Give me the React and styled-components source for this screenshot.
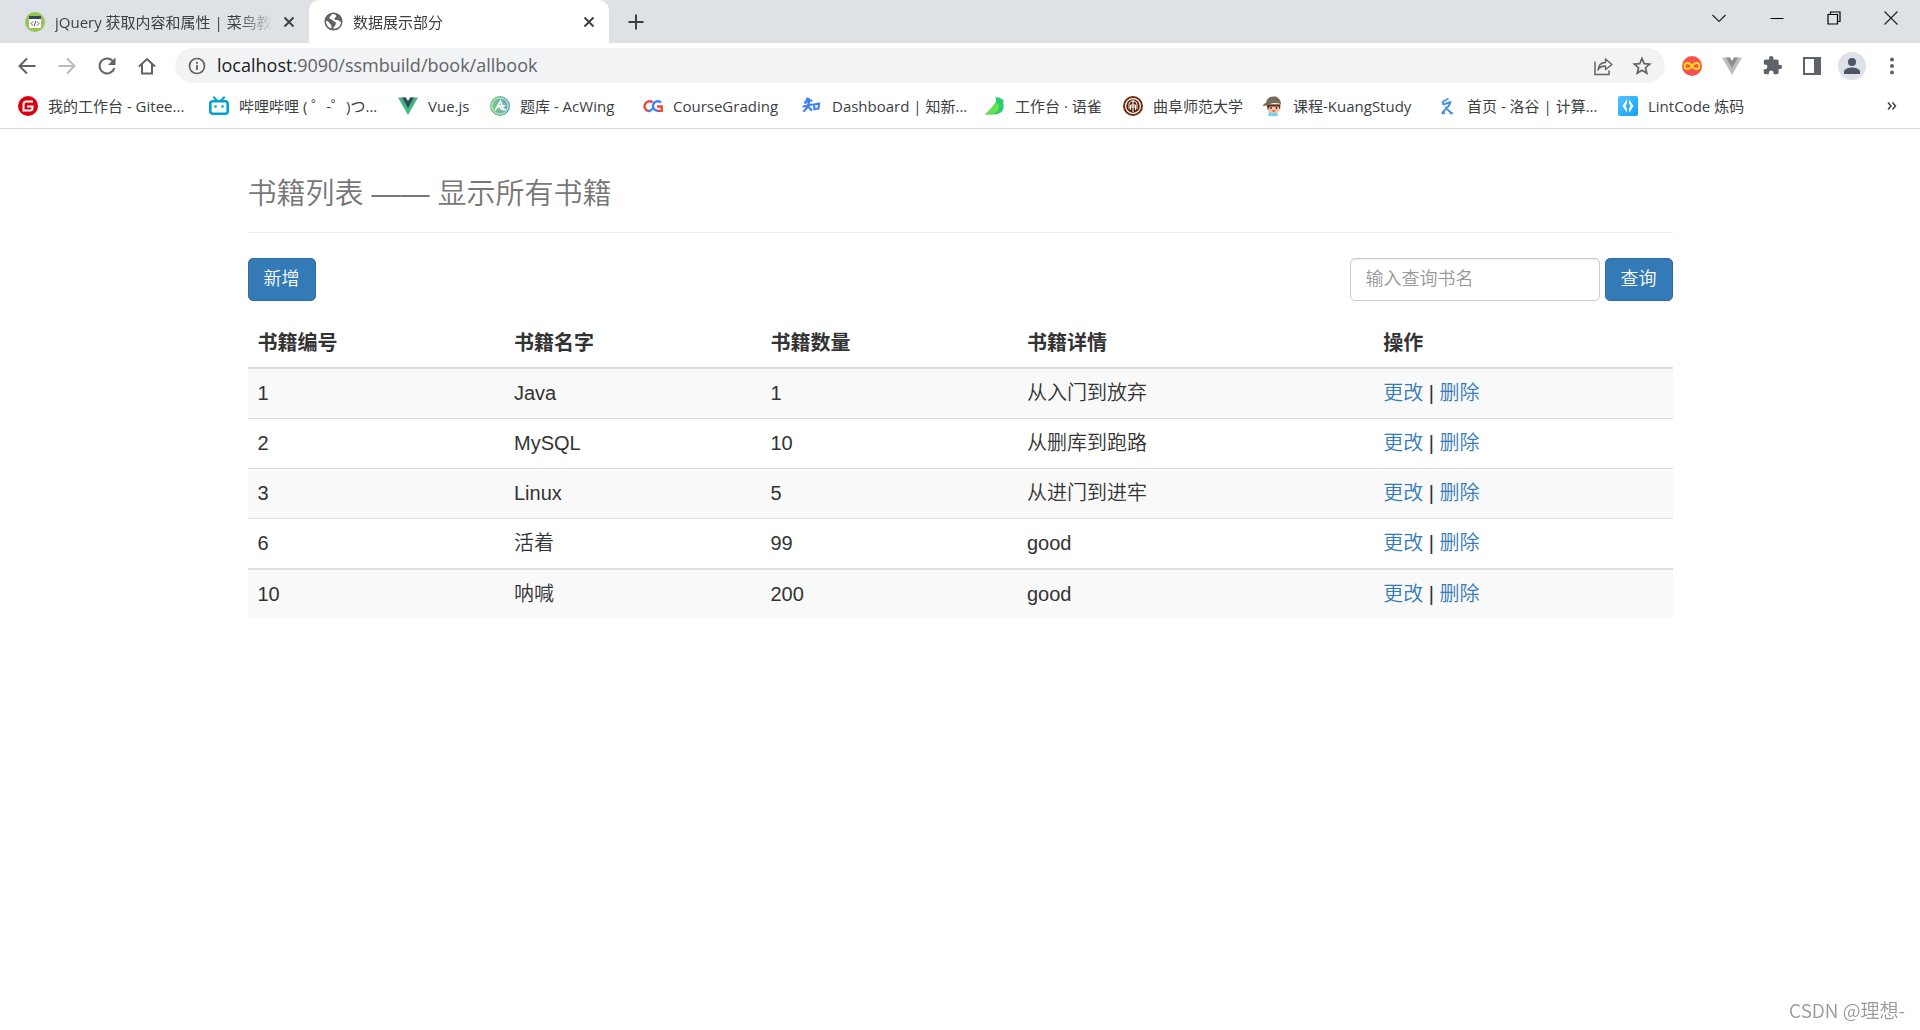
import React, { useState } from 'react';
import styled, { createGlobalStyle } from 'styled-components';

const GlobalStyle = createGlobalStyle`
  * {
    box-sizing: border-box;
  }

  body {
    margin: 0;
    background: #fff;
    color: #333;
    font-family: "Liberation Sans", "Noto Sans CJK SC", sans-serif;
    font-size: 20px;
    font-weight: 350;
    line-height: 29px;
  }

  button, input {
    font-family: inherit;
    font-weight: inherit;
  }
`;

// Browser chrome
const Browser = styled.header`
  font-family: "Open Sans", "Noto Sans CJK SC", sans-serif;
  font-size: 15px;
  font-weight: 400;
  line-height: 20px;
  color: #3c4043;
  border-bottom: 1px solid #d5d8dc;
`;

const TabStrip = styled.div`
  display: flex;
  height: 43px;
  background: #dee1e6;
`;

const Tab = styled.div`
  display: flex;
  align-items: center;
  gap: 10px;
  width: ${props => props.$active ? '300px' : '309px'};
  padding: 0 13px 0 ${props => props.$active ? '15px' : '25px'};
  background: ${props => props.$active ? '#fff' : 'transparent'};
  border-radius: 10px 10px 0 0;
`;

const TabTitle = styled.span`
  flex: 1;
  min-width: 0;
  overflow: hidden;
  white-space: nowrap;
  mask-image: linear-gradient(to right, #000 85%, transparent);
`;

const IconButton = styled.button`
  display: flex;
  flex: none;
  align-items: center;
  justify-content: center;
  width: ${props => props.$width || 40}px;
  height: ${props => props.$height || 36}px;
  padding: 0;
  border: none;
  border-radius: 4px;
  background: none;
  color: ${props => props.$color || '#5f6368'};
  cursor: pointer;
`;

const WindowControls = styled.div`
  display: flex;
  margin-left: auto;
  padding-right: 1px;
`;

const Toolbar = styled.div`
  display: flex;
  align-items: center;
  height: 45px;
  padding: 0 8px 0 7px;
`;

const AddressBar = styled.div`
  display: flex;
  flex: 1;
  align-items: center;
  height: 35px;
  margin: 0 7px 0 8px;
  padding: 0 4px 0 12px;
  border-radius: 18px;
  background: #f1f3f4;
`;

const Url = styled.span`
  flex: 1;
  margin-left: 10px;
  padding-bottom: 2px;
  font-size: 18px;
  color: #5f6368;

  b {
    font-weight: 400;
    color: #202124;
  }
`;

const Avatar = styled.span`
  display: flex;
  align-items: center;
  justify-content: center;
  width: 28px;
  height: 28px;
  border-radius: 50%;
  background: #dee1e6;
`;

const Bookmarks = styled.nav`
  display: flex;
  align-items: center;
  gap: 20px;
  height: 40px;
  padding: 0 8px 4px 18px;
`;

const Bookmark = styled.a`
  display: flex;
  flex: 0 0 ${props => props.$width}px;
  align-items: center;
  gap: 10px;
  min-width: 0;
  white-space: nowrap;
  color: inherit;
  text-decoration: none;

  svg {
    flex: none;
  }
`;

const More = styled.div`
  margin-left: auto;
`;

// Page content
const Container = styled.main`
  max-width: 1463px;
  margin: 0 auto;
  padding: 0 19px;
`;

const PageHeader = styled.div`
  margin: 38px 0 25px;
  padding: 11px 0 22px;
  border-bottom: 1px solid #eee;
`;

const Title = styled.h1`
  margin: 0;
  font-size: 29px;
  font-weight: 350;
  line-height: 32px;
  color: #777;
`;

const Actions = styled.div`
  display: flex;
  justify-content: space-between;
`;

const SearchForm = styled.form`
  display: flex;
  gap: 5px;
`;

const Button = styled.button`
  height: 43px;
  padding: 0 15px;
  border: 1px solid #2e6da4;
  border-radius: 5px;
  background: #337ab7;
  font-size: 18px;
  line-height: 25px;
  color: #fff;
  cursor: pointer;
`;

const SearchInput = styled.input`
  width: 250px;
  height: 43px;
  padding: 0 15px;
  border: 1px solid #ccc;
  border-radius: 5px;
  background: #fff;
  box-shadow: inset 0 1px 1px rgba(0,0,0,0.075);
  font-size: 18px;
  color: #555;

  &::placeholder {
    color: #999;
  }
`;

const Table = styled.table`
  width: 100%;
  margin-top: 17px;
  border-collapse: separate;
  border-spacing: 0;
  table-layout: fixed;
`;

const HeadCell = styled.th`
  width: ${props => props.$width};
  padding: 11px 10px 9px;
  border-bottom: 2px solid #ddd;
  text-align: left;
`;

const Cell = styled.td`
  height: 49px;
  padding: 10px;
`;

const Row = styled.tr`
  &:nth-child(odd) {
    background: #f9f9f9;
  }

  &:not(:first-child) ${Cell} {
    height: 50px;
    border-top: 1px solid #ddd;
  }

  &:last-child ${Cell} {
    padding-bottom: 9px;
    border-top-width: 2px;
  }
`;

const Link = styled.a`
  color: #337ab7;
  text-decoration: none;

  &:hover {
    text-decoration: underline;
  }
`;

const Watermark = styled.div`
  position: fixed;
  right: 15px;
  bottom: 6px;
  font-family: "Noto Sans CJK SC", sans-serif;
  font-size: 19px;
  font-weight: 350;
  color: #999;
  text-shadow: 1px 1px 0 #fff;
`;

const Icon = ({ size = 20, box = 20, children }) => (
  <svg width={size} height={size} viewBox={`0 0 ${box} ${box}`} fill="none" aria-hidden="true">
    {children}
  </svg>
);

const CloseIcon = () => (
  <Icon size={12} box={12}>
    <path d="M1.5 1.5l9 9M10.5 1.5l-9 9" stroke="#3c4043" strokeWidth="1.9" />
  </Icon>
);

const RunoobIcon = () => (
  <Icon>
    <circle cx="10" cy="10" r="10" fill="#96c455" />
    <rect x="4" y="5" width="12" height="11" rx="1" fill="#fff" />
    <path d="M4 4h12v3H4z" fill="#35495e" />
    <path d="M8 9.5l-2 2 2 2M12 9.5l2 2-2 2M10.7 9l-1.4 5" stroke="#555" strokeWidth="1" />
  </Icon>
);

const GlobeIcon = () => (
  <Icon size={19} box={24}>
    <circle cx="12" cy="12" r="11.5" fill="#5f6368" />
    <path d="M10 2.5c-1 3-3 2.5-3 5 0 2 3 1 4 3s4 1 4 4-3 3-3 6.500c6 .2 9.500-4 9.500-9-3 1-2-2-4-2s-3 1-4-1 2-2 2-4c0-1.300-2-2.500-5.500-2.500zM2.500 11.500c0 5 3 8.500 7 9.300-.5-3 .3-4-1.700-5.500S6.500 11.500 2.500 11.500z" fill="#fff" />
  </Icon>
);

const GiteeIcon = () => (
  <Icon>
    <circle cx="10" cy="10" r="10" fill="#d9000f" />
    <path d="M15 5.500H8.500a3 3 0 0 0-3 3v6H12a2.500 2.500 0 0 0 2.500-2.500v-1.600H9" stroke="#fff" strokeWidth="2" />
  </Icon>
);

const BiliIcon = () => (
  <Icon>
    <rect x="1.300" y="5.300" width="17.400" height="12.400" rx="2.500" stroke="#00a1d6" strokeWidth="2.600" />
    <path d="M5 1.500l2.500 2.500M15 1.500L12.500 4" stroke="#00a1d6" strokeWidth="2.200" strokeLinecap="round" />
    <circle cx="6.500" cy="10.500" r="1.300" fill="#00a1d6" />
    <circle cx="13.500" cy="10.500" r="1.300" fill="#00a1d6" />
  </Icon>
);

const VueIcon = ({ outer = '#41b883', inner = '#35495e' }) => (
  <Icon>
    <path d="M0 1.500h7.500L10 5.500l2.500-4H20L10 19z" fill={outer} />
    <path d="M4 1.500h4L10 5l2-3.500h4L10 12z" fill={inner} />
  </Icon>
);

const AcWingIcon = () => (
  <Icon>
    <defs>
      <linearGradient id="acwing" x1="0" x2="1">
        <stop stopColor="#79c878" />
        <stop offset="1" stopColor="#69a9c9" />
      </linearGradient>
    </defs>
    <circle cx="10" cy="10" r="10" fill="url(#acwing)" />
    <circle cx="10" cy="10" r="8" stroke="#d8f0e0" strokeWidth="0.900" />
    <path d="M5 14.500L10.500 5l3.500 9.500M7 12c2-2.500 5-3 8-2M10 10.500c.5 2.500 2.500 3.500 6 3" stroke="#fff" strokeWidth="1.500" />
  </Icon>
);

const CourseIcon = () => (
  <Icon>
    <path d="M9.500 6.200A5 5 0 1 0 5 15" stroke="#f04438" strokeWidth="2.400" />
    <path d="M5 15c2 .2 3.500-.8 4.500-2.500M18 6.500a4.800 4.800 0 1 0-3 8.300" stroke="#3b82f6" strokeWidth="2.400" />
    <path d="M14 10.500h4.700V16M14.500 14.800h4" stroke="#f04438" strokeWidth="2.300" />
  </Icon>
);

const ZhiIcon = () => (
  <Icon>
    <path d="M5.500 2.500L3.500 7M3 6l6.500-1.500M1.500 10.500L10 8.500M7 3c.5 6-1.500 9-5 12M6.500 11l3 3M12 8.500l.5 5M12 8.500l5-1-.5 5-4 .5" stroke="#3f83ee" strokeWidth="2.200" strokeLinecap="round" />
  </Icon>
);

const YuqueIcon = () => (
  <Icon>
    <path d="M10 1.500c4-1 6 .5 7 2l2 .5c-1 1-1 2-.5 4.500C19.500 15 15 18.500 9 18.500H0C5 14 10 8 11 5c.5-1.500 0-2.500-1-3.500z" fill="#2bcb6f" />
    <path d="M0 18.500C5 14 9 9.500 11 6c4 3 4 8 0 10.500-2 1.500-6 2-11 2z" fill="#65e04f" />
  </Icon>
);

const SchoolIcon = () => (
  <Icon>
    <circle cx="10" cy="10" r="9" fill="#fff" stroke="#6d2d0d" strokeWidth="2" />
    <circle cx="10" cy="10" r="6.800" fill="#5a250c" />
    <path d="M6 13V8.500C6 6 8 5 10 5s4 1 4 3.500V13M10 4v12M7.500 14V9h5v5M8 11h4" stroke="#fff" strokeWidth="1" />
  </Icon>
);

const KuangIcon = () => (
  <Icon>
    <path d="M6 15h8l1 5H5z" fill="#72d4ec" />
    <path d="M4 8h13v5c-1 3-3 4-6.500 4S5 16 4 13z" fill="#f3c3a0" />
    <path d="M3.500 8.500h14l-.5 5-1.500-3-9 0L5 14z" fill="#5a2b20" />
    <path d="M3 7C4 1 9 0 12 .5S18 4 18 8c-5-1.500-9-1.500-14 1.500L0 10c0-1.500 1-2.500 3-3z" fill="#756a5b" />
    <circle cx="8" cy="12" r=".9" fill="#402018" />
    <circle cx="13.500" cy="12" r=".9" fill="#402018" />
    <path d="M9 14.500h3.500c-.5 1.500-3 1.500-3.500 0z" fill="#c52c2c" />
  </Icon>
);

const LuoguIcon = () => (
  <Icon>
    <path d="M11.500 2.500L5.500 6l1 2.500L13.500 6 12 9.500 5 17.200M4.500 17.200h3.500M8 11l6.500 6.200M12.500 17.200h3.500" stroke="#4e94d4" strokeWidth="2" strokeLinejoin="round" />
  </Icon>
);

const LintIcon = () => (
  <Icon>
    <defs>
      <linearGradient id="lint" x1="0" y1="0" x2="1" y2="1">
        <stop stopColor="#55c4ff" />
        <stop offset="1" stopColor="#12a0f5" />
      </linearGradient>
    </defs>
    <rect width="20" height="20" rx="2" fill="url(#lint)" />
    <path d="M9 3v4L7.500 10 9 13v3.500L4.500 10zM11 3.500L15.500 10 11 17v-4l1.500-3L11 7z" fill="#fff" />
  </Icon>
);

const bookmarks = [
  { label: '我的工作台 - Gitee...', width: 171, icon: <GiteeIcon /> },
  { label: '哔哩哔哩 ( ゜-゜)つ...', width: 169, icon: <BiliIcon /> },
  { label: 'Vue.js', width: 72, icon: <VueIcon /> },
  { label: '题库 - AcWing', width: 133, icon: <AcWingIcon /> },
  { label: 'CourseGrading', width: 139, icon: <CourseIcon /> },
  { label: 'Dashboard | 知新...', width: 163, icon: <ZhiIcon /> },
  { label: '工作台 · 语雀', width: 118, icon: <YuqueIcon /> },
  { label: '曲阜师范大学', width: 120, icon: <SchoolIcon /> },
  { label: '课程-KuangStudy', width: 154, icon: <KuangIcon /> },
  { label: '首页 - 洛谷 | 计算...', width: 161, icon: <LuoguIcon /> },
  { label: 'LintCode 炼码', width: 130, icon: <LintIcon /> },
];

const columns = [
  { title: '书籍编号', width: '18%' },
  { title: '书籍名字', width: '18%' },
  { title: '书籍数量', width: '18%' },
  { title: '书籍详情', width: '25%' },
  { title: '操作', width: '21%' },
];

const books = [
  { id: 1, name: 'Java', count: 1, detail: '从入门到放弃' },
  { id: 2, name: 'MySQL', count: 10, detail: '从删库到跑路' },
  { id: 3, name: 'Linux', count: 5, detail: '从进门到进牢' },
  { id: 6, name: '活着', count: 99, detail: 'good' },
  { id: 10, name: '呐喊', count: 200, detail: 'good' },
];

const BrowserChrome = () => (
  <Browser>
    <TabStrip>
      <Tab>
        <RunoobIcon />
        <TabTitle>jQuery 获取内容和属性 | 菜鸟教程</TabTitle>
        <IconButton $width={14} $height={20} aria-label="Close tab"><CloseIcon /></IconButton>
      </Tab>
      <Tab $active>
        <GlobeIcon />
        <TabTitle>数据展示部分</TabTitle>
        <IconButton $width={14} $height={20} aria-label="Close tab"><CloseIcon /></IconButton>
      </Tab>
      <IconButton $width={54} $height={43} aria-label="New tab">
        <Icon size={16} box={16}>
          <path d="M8 .5v15M.5 8h15" stroke="#3c4043" strokeWidth="2" />
        </Icon>
      </IconButton>
      <WindowControls>
        <IconButton $width={58} aria-label="Search tabs">
          <Icon size={14} box={14}><path d="M.5 4L7 10.500 13.500 4" stroke="#222" strokeWidth="1.200" /></Icon>
        </IconButton>
        <IconButton $width={57} aria-label="Minimize">
          <Icon size={14} box={14}><path d="M.5 7.500h13" stroke="#000" /></Icon>
        </IconButton>
        <IconButton $width={57} aria-label="Restore">
          <Icon size={14} box={14}>
            <path d="M1 3.500h9.500V13H1zM3.500 3V1H13v9.500h-2" stroke="#000" strokeWidth="1.200" />
          </Icon>
        </IconButton>
        <IconButton $width={57} aria-label="Close window">
          <Icon size={14} box={14}><path d="M.5.5l13 13M13.500.5l-13 13" stroke="#222" strokeWidth="1.200" /></Icon>
        </IconButton>
      </WindowControls>
    </TabStrip>

    <Toolbar>
      <IconButton aria-label="Back">
        <Icon><path d="M18.500 10H3M10 2.500L2.500 10l7.500 7.500" stroke="#5f6368" strokeWidth="2" /></Icon>
      </IconButton>
      <IconButton aria-label="Forward">
        <Icon><path d="M1.500 10H17M10 2.500l7.500 7.500-7.500 7.500" stroke="#babcbe" strokeWidth="2" /></Icon>
      </IconButton>
      <IconButton aria-label="Reload">
        <Icon>
          <path d="M16.500 6A7.500 7.500 0 1 0 17.300 12" stroke="#5f6368" strokeWidth="2" />
          <path d="M18.500 1.500V9H11z" fill="#5f6368" />
        </Icon>
      </IconButton>
      <IconButton aria-label="Home">
        <Icon>
          <path d="M2 10.500L10 3l8 7.500M5 8.500v9h10v-9" stroke="#5f6368" strokeWidth="2" />
        </Icon>
      </IconButton>
      <AddressBar>
        <Icon>
          <circle cx="10" cy="10" r="7.500" stroke="#5f6368" strokeWidth="1.700" />
          <path d="M10 9v5M10 5.800v1.900" stroke="#5f6368" strokeWidth="1.800" />
        </Icon>
        <Url><b>localhost</b>:9090/ssmbuild/book/allbook</Url>
        <IconButton aria-label="Share">
          <Icon>
            <path d="M2 5.500v13h14v-4" stroke="#5f6368" strokeWidth="1.500" />
            <path d="M5 14c.5-5 3-7.500 7.500-7.500V3L19 8.500l-6.500 5V10c-3.500 0-6 1-7.500 4z" stroke="#5f6368" strokeWidth="1.400" strokeLinejoin="round" />
          </Icon>
        </IconButton>
        <IconButton $width={38} aria-label="Bookmark this page">
          <Icon>
            <path d="M10 2.500l2.200 5.100 5.500.5-4.200 3.600 1.300 5.400L10 14.200l-4.800 2.900 1.300-5.400-4.200-3.600 5.500-.5z" stroke="#5f6368" strokeWidth="1.700" />
          </Icon>
        </IconButton>
      </AddressBar>
      <IconButton aria-label="Infinity extension">
        <Icon>
          <circle cx="10" cy="10" r="10" fill="#fb5050" />
          <path d="M10 10c-1.500-2.500-3-3-4.500-3a3 3 0 0 0 0 6c1.500 0 3-.5 4.500-3s3-3 4.500-3a3 3 0 0 1 0 6c-1.500 0-3-.5-4.500-3z" stroke="#ffe118" strokeWidth="1.800" />
        </Icon>
      </IconButton>
      <IconButton aria-label="Vue devtools"><VueIcon outer="#bdbdbd" inner="#8e8e8e" /></IconButton>
      <IconButton aria-label="Extensions">
        <Icon size={21} box={24}>
          <path d="M20.500 11H19V7a2 2 0 0 0-2-2h-4V3.500a2.500 2.500 0 0 0-5 0V5H4a2 2 0 0 0-2 2v3.800h1.500a2.700 2.700 0 0 1 0 5.400H2V20a2 2 0 0 0 2 2h3.800v-1.500a2.700 2.700 0 0 1 5.400 0V22H17a2 2 0 0 0 2-2v-4h1.500a2.500 2.500 0 0 0 0-5z" fill="#5f6368" />
        </Icon>
      </IconButton>
      <IconButton aria-label="Side panel">
        <Icon>
          <path d="M2 2h16v16H2z" stroke="#5f6368" strokeWidth="2" />
          <path d="M12 2h6v16h-6z" fill="#5f6368" />
        </Icon>
      </IconButton>
      <IconButton aria-label="Profile">
        <Avatar>
          <Icon size={16} box={16}>
            <circle cx="8" cy="4" r="4" fill="#4a5568" />
            <path d="M0 16v-2.500C0 11 5 9.500 8 9.500s8 1.500 8 4V16z" fill="#4a5568" />
          </Icon>
        </Avatar>
      </IconButton>
      <IconButton aria-label="Menu">
        <Icon>
          <circle cx="10" cy="3.500" r="2" fill="#5f6368" />
          <circle cx="10" cy="10" r="2" fill="#5f6368" />
          <circle cx="10" cy="16.500" r="2" fill="#5f6368" />
        </Icon>
      </IconButton>
    </Toolbar>

    <Bookmarks>
      {bookmarks.map(item => (
        <Bookmark key={item.label} href="#" $width={item.width}>
          {item.icon}
          {item.label}
        </Bookmark>
      ))}
      <More>
        <IconButton aria-label="More bookmarks">
          <Icon size={10} box={10}><path d="M1 1.500L4 5 1 8.500M5.500 1.500l3 3.500-3 3.500" stroke="#3c4043" strokeWidth="1.500" /></Icon>
        </IconButton>
      </More>
    </Bookmarks>
  </Browser>
);

const App = () => {
  const [query, setQuery] = useState('');

  return (
    <>
      <GlobalStyle />
      <BrowserChrome />
      <Container>
        <PageHeader>
          <Title>书籍列表 —— 显示所有书籍</Title>
        </PageHeader>

        <Actions>
          <Button type="button">新增</Button>
          <SearchForm onSubmit={(e) => e.preventDefault()}>
            <SearchInput
              type="text"
              aria-label="输入查询书名"
              placeholder="输入查询书名"
              value={query}
              onChange={(e) => setQuery(e.target.value)}
            />
            <Button type="submit">查询</Button>
          </SearchForm>
        </Actions>

        <Table>
          <thead>
            <tr>
              {columns.map(col => (
                <HeadCell key={col.title} $width={col.width}>{col.title}</HeadCell>
              ))}
            </tr>
          </thead>
          <tbody>
            {books.map(book => (
              <Row key={book.id}>
                <Cell>{book.id}</Cell>
                <Cell>{book.name}</Cell>
                <Cell>{book.count}</Cell>
                <Cell>{book.detail}</Cell>
                <Cell>
                  <Link href="#">更改</Link> | <Link href="#">删除</Link>
                </Cell>
              </Row>
            ))}
          </tbody>
        </Table>
      </Container>
      <Watermark>CSDN @理想-</Watermark>
    </>
  );
};

export default App;
